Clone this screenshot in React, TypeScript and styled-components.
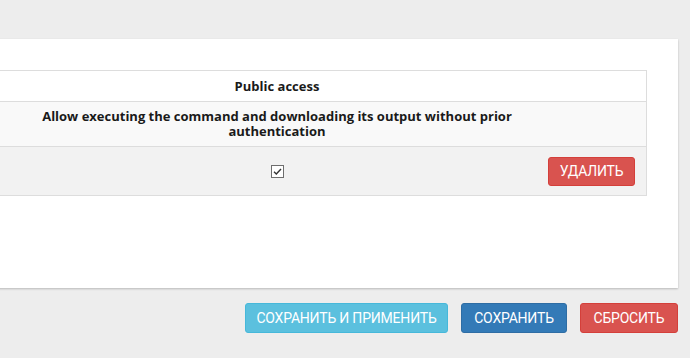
import React from "react";
import styled, { createGlobalStyle } from "styled-components";

const Global = createGlobalStyle`
  html, body { margin: 0; padding: 0; background: #ededed; overflow: hidden; }
  body { font-family: "Open Sans", "Liberation Sans", sans-serif; }
`;

const Page = styled.div`
  width: 690px;
  height: 358px;
  padding-top: 39px;
  box-sizing: border-box;
  display: flex;
  flex-direction: column;
`;

const Panel = styled.div`
  margin-left: -40px;
  width: 718px;
  box-sizing: border-box;
  background: #fff;
  padding: 31px 31px 92px 31px;
  box-shadow: 0 1px 2px rgba(0, 0, 0, 0.22);
`;

const Table = styled.div`
  display: grid;
  grid-template-columns: 33px 506px 1fr;
  border: 1px solid #dddddd;
  border-left: none;
`;

const Cell = styled.div<{ $bg: string; $height: number; $top?: boolean }>`
  background: ${(p) => p.$bg};
  height: ${(p) => p.$height}px;
  box-sizing: border-box;
  border-top: ${(p) => (p.$top ? "1px solid #dddddd" : "none")};
  display: flex;
  align-items: center;
  justify-content: center;
  padding: 0 8px;
`;

const ActionCell = styled(Cell)`
  justify-content: flex-end;
  padding: 0 11px 0 0;
`;

const HeadText = styled.div`
  font-size: 13px;
  font-weight: 700;
  line-height: 15px;
  color: #1a1a1a;
  text-align: center;
`;

const Button = styled.button<{ $bg: string; $border: string; $w: number }>`
  width: ${(p) => p.$w}px;
  height: 30px;
  background: ${(p) => p.$bg};
  border: 1px solid ${(p) => p.$border};
  border-radius: 3px;
  color: #fff;
  font-family: Roboto, "Liberation Sans", sans-serif;
  font-size: 14px;
  letter-spacing: -0.2px;
  text-transform: uppercase;
  padding: 0;
  display: flex;
  align-items: center;
  justify-content: center;
`;

const Footer = styled.div`
  display: flex;
  justify-content: flex-end;
  gap: 13px;
  padding: 15px 12px 0 0;
`;

const Check = () => (
  <svg width="13" height="13" viewBox="0 0 13 13">
    <rect x="0.5" y="0.5" width="12" height="12" fill="#fff" stroke="#6e6e6e" />
    <path d="M3 6.8 L5.3 9 L10 4" fill="none" stroke="#333" strokeWidth="1.4" />
  </svg>
);

export default function App() {
  return (
    <>
      <Global />
      <Page>
        <Panel>
          <Table>
            <Cell $bg="#ffffff" $height={30} />
            <Cell $bg="#ffffff" $height={30}>
              <HeadText>Public access</HeadText>
            </Cell>
            <Cell $bg="#ffffff" $height={30} />

            <Cell $bg="#f9f9f9" $height={45} $top />
            <Cell $bg="#f9f9f9" $height={45} $top>
              <HeadText>
                Allow executing the command and downloading its output without prior authentication
              </HeadText>
            </Cell>
            <Cell $bg="#f9f9f9" $height={45} $top />

            <Cell $bg="#f2f2f2" $height={49} $top />
            <Cell $bg="#f2f2f2" $height={49} $top>
              <Check />
            </Cell>
            <ActionCell $bg="#f2f2f2" $height={49} $top>
              <Button $bg="#d9534f" $border="#d43f3a" $w={87} style={{ height: 29 }}>
                Удалить
              </Button>
            </ActionCell>
          </Table>
        </Panel>
        <Footer>
          <Button $bg="#5bc0de" $border="#46b8da" $w={203}>
            Сохранить и применить
          </Button>
          <Button $bg="#337ab7" $border="#2e6da4" $w={106}>
            Сохранить
          </Button>
          <Button $bg="#d9534f" $border="#d43f3a" $w={98}>
            Сбросить
          </Button>
        </Footer>
      </Page>
    </>
  );
}
